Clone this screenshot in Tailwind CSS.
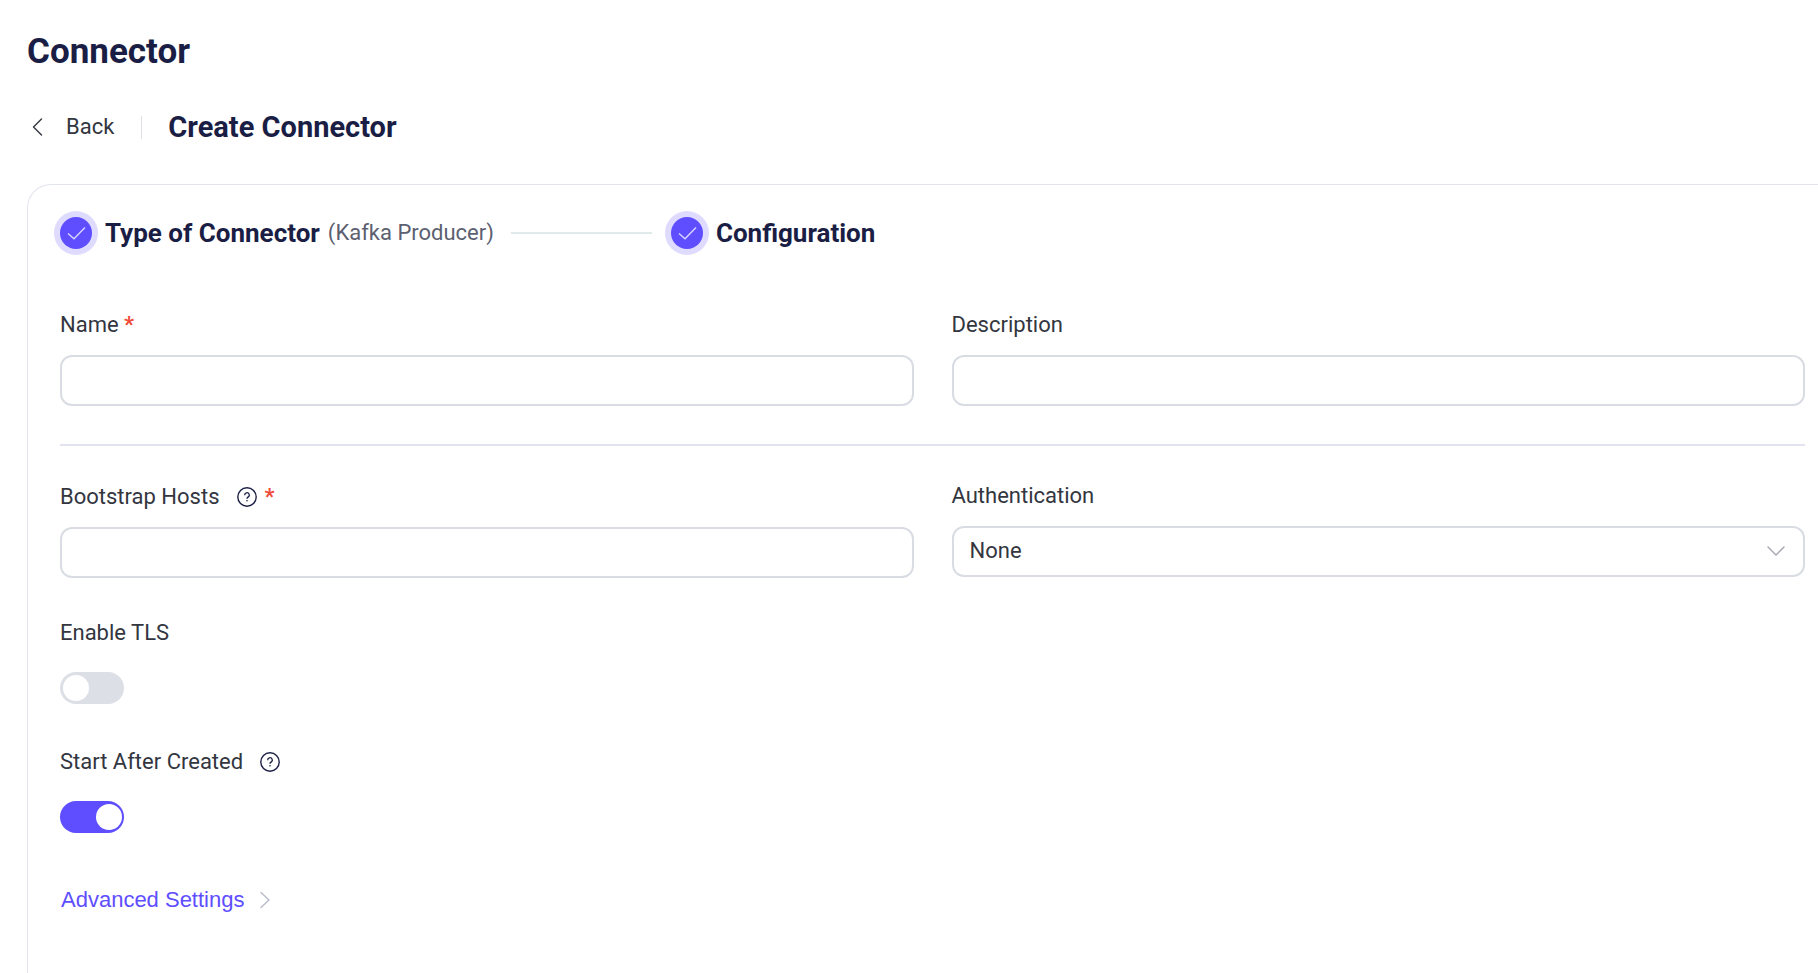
<!DOCTYPE html>
<html lang="en">
<head>
  <meta charset="UTF-8">
  <meta name="viewport" content="width=device-width, initial-scale=1.0">
  <title>Create Connector</title>

  <!-- Tailwind CSS -->
  <script src="https://cdn.jsdelivr.net/npm/@tailwindcss/browser@4"></script>
</head>

<body class="bg-white min-h-screen flex flex-col pl-[27px] pt-[29px] font-['Roboto',sans-serif] text-[22px] leading-[30px] text-[#33363f]">

  <h1 class="text-[35px] leading-[46px] font-bold text-[#1a1e44]">Connector</h1>

  <!-- Page header -->
  <header class="flex items-center mt-8 mb-[37px] h-10">
    <button type="button" class="flex items-center gap-[23px] pl-[5px]">
      <svg class="w-[11px] h-[18px]" viewBox="0 0 11 18" fill="none" stroke="#33363f" stroke-width="1.4" stroke-linecap="round" stroke-linejoin="round" aria-hidden="true">
        <path d="M9.5 1 1.5 9l8 8"/>
      </svg>
      Back
    </button>
    <span class="w-px h-[23px] bg-[#dcdfe6] ml-[27px] mr-[26px]"></span>
    <h2 class="text-[29px] leading-10 font-bold text-[#1a1e44]">Create Connector</h2>
  </header>

  <main class="flex-1 border-t border-l border-[#e1e4ee] rounded-tl-[24px] pl-8 pr-[13px] pt-8 pb-10">

    <!-- Steps -->
    <ol class="flex items-center h-8 text-[#1a1e44]">
      <li class="flex items-center">
        <span class="flex items-center justify-center size-8 rounded-full bg-[#5e4eff] ring-[6px] ring-[#dedbff]">
          <svg class="w-[20px] h-[14px]" viewBox="0 0 20 14" fill="none" stroke="#d9d5ff" stroke-width="1.4" aria-hidden="true">
            <path d="M2 7.4 8 12.8 19 1.6"/>
          </svg>
        </span>
        <span class="ml-[13px] text-[26px] font-bold">Type of Connector</span>
        <span class="ml-[8px] text-[#5c6070]">(Kafka Producer)</span>
      </li>
      <li class="w-[141px] h-[2px] bg-[#e1eaea] ml-[17px] mr-[19px]" aria-hidden="true"></li>
      <li class="flex items-center">
        <span class="flex items-center justify-center size-8 rounded-full bg-[#5e4eff] ring-[6px] ring-[#dedbff]">
          <svg class="w-[20px] h-[14px]" viewBox="0 0 20 14" fill="none" stroke="#d9d5ff" stroke-width="1.4" aria-hidden="true">
            <path d="M2 7.4 8 12.8 19 1.6"/>
          </svg>
        </span>
        <span class="ml-[13px] text-[26px] font-bold">Configuration</span>
      </li>
    </ol>

    <form id="connectorForm">

      <div class="grid grid-cols-2 gap-x-[38px] mt-[61px]">
        <div>
          <label for="name" class="block">Name <span class="font-bold text-[#f04b3a]">*</span></label>
          <input type="text" id="name" class="block w-full h-[51px] mt-[15px] px-4 border-2 border-[#d9dde3] rounded-[12px]" required>
        </div>
        <div>
          <label for="description" class="block">Description</label>
          <input type="text" id="description" class="block w-full h-[51px] mt-[15px] px-4 border-2 border-[#d9dde3] rounded-[12px]">
        </div>
      </div>

      <hr class="border-t-2 border-[#e1e4f0] mt-[38px] mb-[35px]">

      <div class="grid grid-cols-2 gap-x-[38px]">
        <div>
          <label for="hosts" class="flex items-center h-[31px]">
            Bootstrap Hosts
            <svg class="size-5 ml-[17px] mr-2" viewBox="0 0 20 20" fill="none" stroke="#1a1e44" stroke-width="1.4" aria-hidden="true">
              <circle cx="10" cy="10" r="9.2"/>
              <path d="M7.7 8.2a2.3 2.3 0 1 1 3.6 1.7c-.9.6-1.3.9-1.3 1.8" stroke-width="1.3"/>
              <circle cx="10" cy="13.7" r=".8" fill="#1a1e44" stroke="none"/>
            </svg>
            <span class="font-bold text-[#f04b3a]">*</span>
          </label>
          <input type="text" id="hosts" class="block w-full h-[51px] mt-[15px] px-4 border-2 border-[#d9dde3] rounded-[12px]" required>
        </div>
        <div>
          <label for="authentication" class="block">Authentication</label>
          <div class="relative mt-[15px]">
            <select id="authentication" class="block w-full h-[51px] pl-4 pr-12 pb-[2px] border-2 border-[#d9dde3] rounded-[12px] appearance-none bg-white">
              <option>None</option>
            </select>
            <svg class="absolute right-[20px] top-5 w-[18px] h-[11px] pointer-events-none" viewBox="0 0 18 11" fill="none" stroke="#a3a6ad" stroke-width="1.4" stroke-linecap="round" stroke-linejoin="round" aria-hidden="true">
              <path d="M1 1 9 9l8-8"/>
            </svg>
          </div>
        </div>
      </div>

      <div class="mt-10">
        <label for="tls" class="block">Enable TLS</label>
        <input type="checkbox" id="tls" role="switch" class="block appearance-none w-16 h-8 mt-6 p-[3px] rounded-full bg-[#dcdfe6] checked:bg-[#5e4eff] before:block before:size-[26px] before:rounded-full before:bg-white checked:before:translate-x-[33px]">
      </div>

      <div class="mt-[42px]">
        <label for="autostart" class="flex items-center h-[31px]">
          Start After Created
          <svg class="size-5 ml-[17px]" viewBox="0 0 20 20" fill="none" stroke="#1a1e44" stroke-width="1.4" aria-hidden="true">
            <circle cx="10" cy="10" r="9.2"/>
            <path d="M7.7 8.2a2.3 2.3 0 1 1 3.6 1.7c-.9.6-1.3.9-1.3 1.8" stroke-width="1.3"/>
            <circle cx="10" cy="13.7" r=".8" fill="#1a1e44" stroke="none"/>
          </svg>
        </label>
        <input type="checkbox" id="autostart" role="switch" checked class="block appearance-none w-16 h-8 mt-6 p-[3px] rounded-full bg-[#dcdfe6] checked:bg-[#5e4eff] before:block before:size-[26px] before:rounded-full before:bg-white checked:before:translate-x-[33px]">
      </div>

      <button type="button" class="flex items-center mt-[52px] pl-px gap-[16px] font-['Liberation_Sans',Arial,sans-serif] text-[#5e4eff]">
        Advanced Settings
        <svg class="w-[10px] h-[18px]" viewBox="0 0 10 18" fill="none" stroke="#b9bccb" stroke-width="1.4" stroke-linecap="round" stroke-linejoin="round" aria-hidden="true">
          <path d="m1 1.5 8 7.5-8 7.5"/>
        </svg>
      </button>

    </form>
  </main>

</body>
</html>
